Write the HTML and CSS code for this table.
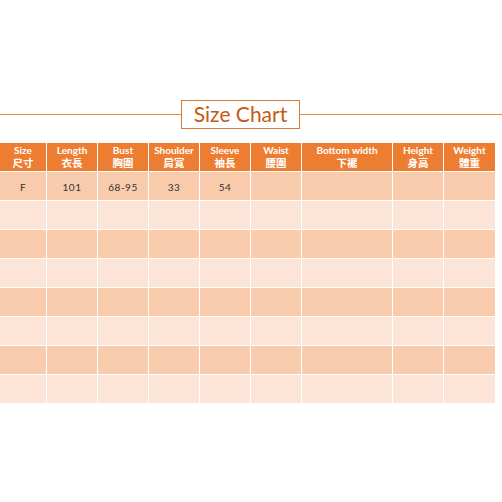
FILE: index.html
```html
<!DOCTYPE html>
<html>
<head>
<meta charset="utf-8">
<link rel="stylesheet" href="styles.css">
</head>
<body>
<div class="title-row">
  <div class="rule"></div>
  <div class="title-box">Size Chart</div>
  <div class="rule"></div>
</div>
<div class="chart">
  <div class="hd"><span>Size</span><span class="zh">尺寸</span></div>
  <div class="hd"><span>Length</span><span class="zh">衣長</span></div>
  <div class="hd"><span>Bust</span><span class="zh">胸圍</span></div>
  <div class="hd"><span>Shoulder</span><span class="zh">肩寬</span></div>
  <div class="hd"><span>Sleeve</span><span class="zh">袖長</span></div>
  <div class="hd"><span>Waist</span><span class="zh">腰圍</span></div>
  <div class="hd"><span>Bottom width</span><span class="zh">下襬</span></div>
  <div class="hd"><span>Height</span><span class="zh">身高</span></div>
  <div class="hd"><span>Weight</span><span class="zh">體重</span></div>

  <div class="c d">F</div><div class="c d">101</div><div class="c d">68-95</div><div class="c d">33</div><div class="c d">54</div><div class="c d"></div><div class="c d"></div><div class="c d"></div><div class="c d"></div>
  <div class="c l"></div><div class="c l"></div><div class="c l"></div><div class="c l"></div><div class="c l"></div><div class="c l"></div><div class="c l"></div><div class="c l"></div><div class="c l"></div>
  <div class="c d"></div><div class="c d"></div><div class="c d"></div><div class="c d"></div><div class="c d"></div><div class="c d"></div><div class="c d"></div><div class="c d"></div><div class="c d"></div>
  <div class="c l"></div><div class="c l"></div><div class="c l"></div><div class="c l"></div><div class="c l"></div><div class="c l"></div><div class="c l"></div><div class="c l"></div><div class="c l"></div>
  <div class="c d"></div><div class="c d"></div><div class="c d"></div><div class="c d"></div><div class="c d"></div><div class="c d"></div><div class="c d"></div><div class="c d"></div><div class="c d"></div>
  <div class="c l"></div><div class="c l"></div><div class="c l"></div><div class="c l"></div><div class="c l"></div><div class="c l"></div><div class="c l"></div><div class="c l"></div><div class="c l"></div>
  <div class="c d"></div><div class="c d"></div><div class="c d"></div><div class="c d"></div><div class="c d"></div><div class="c d"></div><div class="c d"></div><div class="c d"></div><div class="c d"></div>
  <div class="c l"></div><div class="c l"></div><div class="c l"></div><div class="c l"></div><div class="c l"></div><div class="c l"></div><div class="c l"></div><div class="c l"></div><div class="c l"></div>
</div>
</body>
</html>
```
FILE: styles.css
```css
html, body {
  margin: 0;
  padding: 0;
  background: #ffffff;
}
body {
  font-family: Lato, "Noto Sans CJK TC", sans-serif;
  width: 502px;
  height: 502px;
  overflow: hidden;
}
.title-row {
  display: flex;
  align-items: center;
  padding-top: 100px;
  height: 29px;
}
.rule {
  flex: 1;
  height: 1px;
  background: #e58a4e;
}
.rule:first-child {
  flex: 0 0 181px;
}
.title-box {
  box-sizing: border-box;
  width: 119px;
  height: 29px;
  border: 1px solid #d47a3e;
  color: #c55a11;
  font-size: 21px;
  line-height: 26px;
  text-align: center;
}
.chart {
  margin-top: 14px;
  width: 495px;
  display: grid;
  grid-template-columns: 46px 50px 50px 50px 50px 50px 90px 50px 51px;
  grid-auto-rows: 28px;
  gap: 1px;
}
.hd {
  background: #ed7d31;
  color: #ffffff;
  font-weight: bold;
  font-size: 10px;
  line-height: 12px;
  padding-bottom: 1px;
  display: flex;
  flex-direction: column;
  align-items: center;
  justify-content: center;
}
.hd .zh {
  font-family: "Noto Sans CJK TC", sans-serif;
  font-size: 10.5px;
  line-height: 13px;
}
.c {
  font-size: 10px;
  color: #333333;
  letter-spacing: 0.5px;
  padding-top: 2px;
  display: flex;
  align-items: center;
  justify-content: center;
}
.d {
  background: #f8cbad;
}
.l {
  background: #fce4d6;
}
```
